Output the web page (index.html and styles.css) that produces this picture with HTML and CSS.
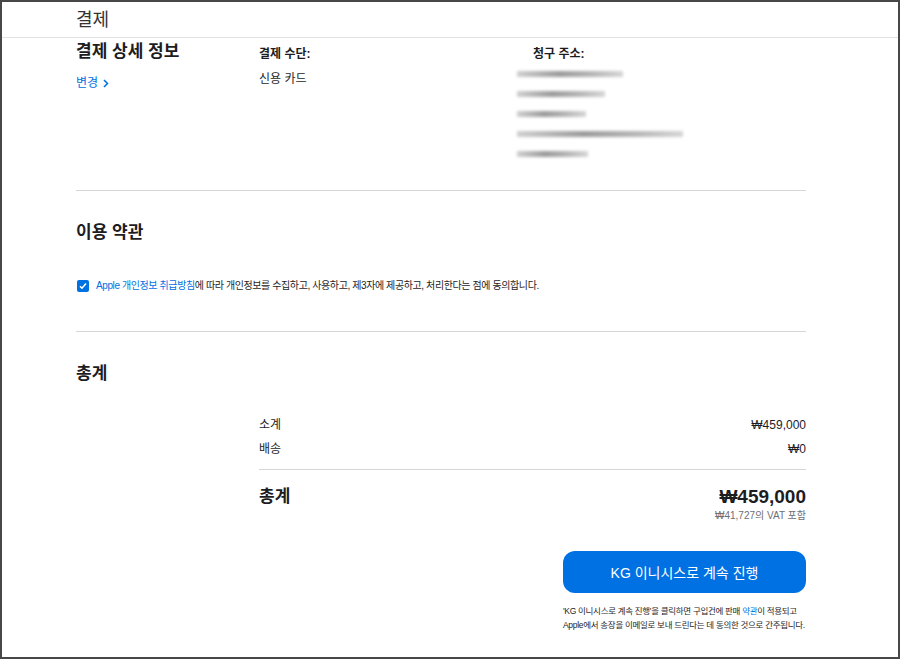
FILE: index.html
```html
<!DOCTYPE html>
<html lang="ko">
<head>
    <meta charset="UTF-8">
    <meta name="viewport" content="width=device-width, initial-scale=1.0">
    <title>결제</title>
    <link rel="stylesheet" href="styles.css">
</head>
<body>
    <div class="frame">
        <header class="page-header">
            <h1>결제</h1>
        </header>

        <main class="content">
            <!-- 결제 상세 정보 -->
            <section class="details">
                <div class="details-col">
                    <h2 class="section-title">결제 상세 정보</h2>
                    <a class="change-link" href="#">변경
                        <svg width="6" height="9" viewBox="0 0 6 9"><path d="M1 1l3.5 3.5L1 8" fill="none" stroke="#0071e3" stroke-width="1.5"/></svg>
                    </a>
                </div>
                <div class="details-col">
                    <h3 class="col-label">결제 수단:</h3>
                    <p class="col-value">신용 카드</p>
                </div>
                <div class="details-col address">
                    <h3 class="col-label">청구 주소:</h3>
                    <div class="blur-lines">
                        <span class="blur-line" style="width: 106px"></span>
                        <span class="blur-line" style="width: 88px"></span>
                        <span class="blur-line" style="width: 69px"></span>
                        <span class="blur-line" style="width: 166px"></span>
                        <span class="blur-line" style="width: 71px"></span>
                    </div>
                </div>
            </section>

            <!-- 이용 약관 -->
            <section class="terms">
                <h2 class="section-title">이용 약관</h2>
                <label class="agree">
                    <span class="checkbox">
                        <svg width="10" height="10" viewBox="0 0 10 10"><path d="M2 5.2l2 2L8 2.6" fill="none" stroke="#fff" stroke-width="1.6"/></svg>
                    </span>
                    <span><a href="#">Apple 개인정보 취급방침</a>에 따라 개인정보를 수집하고, 사용하고, 제3자에 제공하고, 처리한다는 점에 동의합니다.</span>
                </label>
            </section>

            <!-- 총계 -->
            <section class="summary">
                <h2 class="section-title">총계</h2>
                <div class="totals">
                    <div class="row">
                        <span>소계</span>
                        <span>₩459,000</span>
                    </div>
                    <div class="row">
                        <span>배송</span>
                        <span>₩0</span>
                    </div>
                    <div class="row total">
                        <span>총계</span>
                        <span>₩459,000</span>
                    </div>
                    <p class="vat">₩41,727의 VAT 포함</p>

                    <div class="checkout">
                        <button type="button" class="pay-button">KG 이니시스로 계속 진행</button>
                        <p class="note">'KG 이니시스로 계속 진행'을 클릭하면 구입건에 판매 <a href="#">약관</a>이 적용되고<br>Apple에서 송장을 이메일로 보내 드린다는 데 동의한 것으로 간주됩니다.</p>
                    </div>
                </div>
            </section>
        </main>
    </div>
</body>
</html>
```

FILE: styles.css
```css
* {
    box-sizing: border-box;
}
body {
    margin: 0;
    font-family: "Liberation Sans", "Noto Sans CJK KR", sans-serif;
    color: #1d1d1f;
    background: #fff;
}
a {
    color: #0071e3;
    text-decoration: none;
}
h1, h2, h3, p {
    margin: 0;
}
.frame {
    width: 900px;
    height: 659px;
    border: 2px solid #474747;
    overflow: hidden;
}
.page-header {
    height: 36px;
    border-bottom: 1px solid #e3e3e3;
    padding-left: 74px;
}
.page-header h1 {
    font-size: 18px;
    font-weight: 400;
    line-height: 34px;
    padding-top: 1px;
    color: #333;
}
.content {
    padding: 0 92px 0 74px;
}
.section-title {
    font-size: 17px;
    font-weight: 700;
    line-height: 22px;
}
.details {
    display: grid;
    grid-template-columns: 183px 258px 1fr;
    padding: 3px 0 33px;
    border-bottom: 1px solid #d6d6d6;
}
.change-link {
    display: inline-flex;
    align-items: center;
    gap: 5px;
    margin-top: 12px;
    font-size: 12px;
    line-height: 16px;
}
.col-label {
    font-size: 12px;
    font-weight: 700;
    line-height: 16px;
    margin-top: 5px;
}
.address .col-label {
    padding-left: 16px;
}
.col-value {
    font-size: 12px;
    line-height: 16px;
    margin-top: 9px;
}
.blur-lines {
    display: flex;
    flex-direction: column;
    gap: 14px;
    margin-top: 9px;
}
.blur-line {
    display: block;
    height: 6px;
    background: linear-gradient(90deg, #c8c8c8, #8a8a8a 40%, #a8a8a8 70%, #cfcfcf);
    filter: blur(1.6px);
    opacity: 0.85;
}
.terms {
    padding: 31px 0 37px;
    border-bottom: 1px solid #d6d6d6;
}
.agree {
    display: flex;
    align-items: center;
    gap: 7px;
    margin-top: 34px;
    font-size: 10px;
    letter-spacing: -0.4px;
    line-height: 16px;
    color: #1d1d1f;
}
.checkbox {
    display: flex;
    align-items: center;
    justify-content: center;
    width: 12px;
    height: 12px;
    margin-left: 1px;
    border-radius: 2px;
    background: #0071e3;
}
.summary {
    padding-top: 31px;
}
.totals {
    margin-left: 183px;
    margin-top: 32px;
}
.row {
    display: flex;
    justify-content: space-between;
    font-size: 12px;
    line-height: 16px;
    margin-bottom: 8px;
}
.row:nth-child(2) {
    padding-bottom: 12px;
    border-bottom: 1px solid #d6d6d6;
    margin-bottom: 15px;
}
.row.total {
    align-items: center;
    font-size: 17px;
    font-weight: 700;
    line-height: 24px;
    margin-bottom: 0;
}
.row.total span:last-child {
    font-size: 19px;
}
.vat {
    text-align: right;
    font-size: 10px;
    line-height: 14px;
    color: #6e6e73;
}
.checkout {
    width: 243px;
    margin: 28px 0 0 auto;
}
.pay-button {
    display: block;
    width: 100%;
    height: 42px;
    border: 0;
    border-radius: 12px;
    background: #0071e3;
    color: #fff;
    font-family: inherit;
    font-size: 14px;
}
.note {
    margin-top: 11px;
    font-size: 8.5px;
    letter-spacing: -0.3px;
    line-height: 14px;
    white-space: nowrap;
    color: #1d1d1f;
}
```
